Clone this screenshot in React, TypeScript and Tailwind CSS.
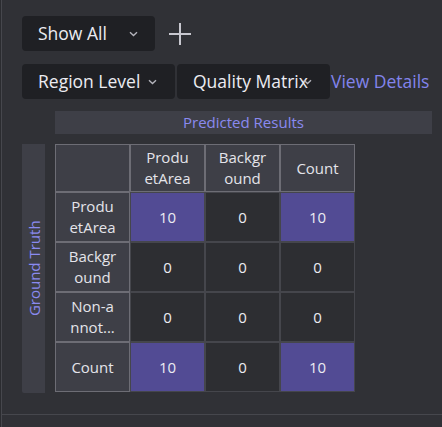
import React from "react";

const Chevron = ({ className = "" }: { className?: string }) => (
  <svg width="9" height="6" viewBox="0 0 9 6" className={className}>
    <path d="M1 1.2 L4.5 4.5 L8 1.2" fill="none" stroke="#b4b4bc" strokeWidth="1.4" />
  </svg>
);

const HeadCell = ({ children }: { children: React.ReactNode }) => (
  <div className="flex items-center justify-center border border-[#6d6d75] bg-[#3e3f47] text-center text-[15px] leading-[21px] text-[#e4e4ea]">
    <div>{children}</div>
  </div>
);

const DataCell = ({ v, hi }: { v: string; hi?: boolean }) => (
  <div
    className={
      hi
        ? "flex items-center justify-center border border-[#45464c] bg-[#524b94] text-[15px] text-[#ececf2]"
        : "flex items-center justify-center border border-[#45464c] bg-[#2d2e32] text-[15px] text-[#ececf2]"
    }
  >
    {v}
  </div>
);

export default function App() {
  return (
    <div className="h-[427px] w-[442px] bg-[#2b2c30] pl-[1px] font-['Open_Sans',sans-serif]">
      <div className="h-[427px] border-l border-[#46474d] bg-[#303136]">
        <div className="h-[415px] border-b border-[#46474d] pl-[20px] pt-[16px]">
          <div className="flex items-center">
            <div className="flex h-[35px] w-[133px] items-center justify-between rounded-[4px] bg-[#1f2024] pl-[16px] pr-[17px] text-[17.5px] text-[#ececf2]">
              <span>Show All</span>
              <Chevron />
            </div>
            <svg width="24" height="24" viewBox="0 0 24 24" className="ml-[13px]">
              <path d="M12 1 V23 M1 12 H23" stroke="#c8c8d0" strokeWidth="2" />
            </svg>
          </div>
          <div className="mt-[13px] flex items-center">
            <div className="flex h-[35px] w-[153px] items-center rounded-[4px] bg-[#1f2024] pl-[16px] text-[17.5px] text-[#ececf2]">
              <span className="whitespace-nowrap">Region Level</span>
              <Chevron className="ml-[8px]" />
            </div>
            <div className="relative ml-[2px] flex h-[35px] w-[153px] items-center rounded-[4px] bg-[#1f2024] pl-[16px] text-[17.5px] text-[#ececf2]">
              <span className="whitespace-nowrap">Quality Matrix</span>
              <Chevron className="absolute left-[126px] top-[15px]" />
            </div>
            <span className="ml-[1px] whitespace-nowrap text-[17.5px] text-[#8284ec]">View Details</span>
          </div>
          <div className="ml-[33px] mt-[12px] flex h-[23px] w-[377px] items-center justify-center bg-[#3e3f47] text-[15px] text-[#8a8af0]">
            Predicted Results
          </div>
          <div className="mt-[10px] flex">
            <div className="flex h-[249px] w-[23px] items-center justify-center rounded-bl-[2px] bg-[#3e3f47]">
              <span className="-rotate-90 whitespace-nowrap text-[15px] text-[#8a8af0]">Ground Truth</span>
            </div>
            <div className="ml-[10px] grid w-[300px] grid-cols-[75px_75px_75px_75px] grid-rows-[48px_50px_50px_50px_50px]">
              <HeadCell>{""}</HeadCell>
              <HeadCell>
                Produ
                <br />
                etArea
              </HeadCell>
              <HeadCell>
                Backgr
                <br />
                ound
              </HeadCell>
              <HeadCell>Count</HeadCell>

              <HeadCell>
                Produ
                <br />
                etArea
              </HeadCell>
              <DataCell v="10" hi />
              <DataCell v="0" />
              <DataCell v="10" hi />

              <HeadCell>
                Backgr
                <br />
                ound
              </HeadCell>
              <DataCell v="0" />
              <DataCell v="0" />
              <DataCell v="0" />

              <HeadCell>
                Non-a
                <br />
                nnot...
              </HeadCell>
              <DataCell v="0" />
              <DataCell v="0" />
              <DataCell v="0" />

              <HeadCell>Count</HeadCell>
              <DataCell v="10" hi />
              <DataCell v="0" />
              <DataCell v="10" hi />
            </div>
          </div>
        </div>
      </div>
    </div>
  );
}
